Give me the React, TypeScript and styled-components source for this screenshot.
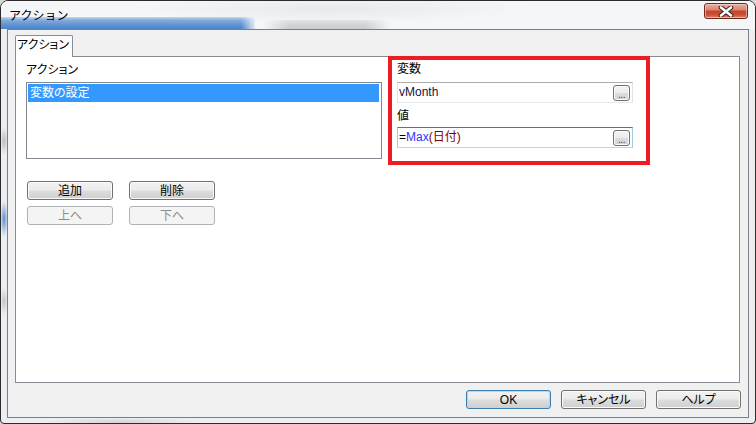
import styled, { createGlobalStyle } from "styled-components";

const GlobalStyle = createGlobalStyle`
  html, body {
    margin: 0;
    padding: 0;
    background: #d9dadc;
  }
  body {
    font-family: "Liberation Sans", "Noto Sans CJK JP", sans-serif;
    font-size: 12px;
    font-feature-settings: "palt";
    color: #000;
  }
  * { box-sizing: border-box; }
`;

const Window = styled.div`
  width: 756px;
  height: 424px;
  border: 1px solid #2b2b2b;
  border-radius: 8px 8px 4px 4px;
  background-color: #eceef1;
  background-image:
    radial-gradient(ellipse 4px 18px at 3px 218px, #5d8fd0, rgba(93, 143, 208, 0)),
    radial-gradient(ellipse 4px 14px at 3px 140px, #b9bcc0, rgba(185, 188, 192, 0)),
    radial-gradient(ellipse 4px 14px at 3px 300px, #c3c5c8, rgba(195, 197, 200, 0)),
    radial-gradient(ellipse 80px 4px at 120px 421px, #d2d4d6, rgba(210, 212, 214, 0));
  background-repeat: no-repeat;
  display: flex;
  flex-direction: column;
  padding: 0 6px 5px 6px;
  overflow: hidden;
`;

const TitleBar = styled.div`
  height: 28px;
  margin: 0 -6px;
  padding: 0 7px 0 7px;
  display: flex;
  justify-content: space-between;
  align-items: flex-start;
  background-color: #f5f6f8;
  background-image:
    linear-gradient(to right, rgba(245, 246, 248, 0), #f5f6f8),
    linear-gradient(to bottom, #c4d7ef, #86acdd 25%, #6596d2 60%, #4a84c8),
    linear-gradient(to right, rgba(245, 246, 248, 1), rgba(245, 246, 248, 0) 20%, rgba(245, 246, 248, 0) 80%, rgba(245, 246, 248, 1)),
    linear-gradient(to bottom, #e2e3e5, #d3d4d6 50%, #cbcccd),
    radial-gradient(ellipse 200px 14px at 330px 8px, #e8e9eb, rgba(245, 246, 248, 0));
  background-position: 240px 16px, 0 16px, 262px 19px, 262px 19px, 0 0;
  background-size: 16px 12px, 254px 12px, 128px 9px, 128px 9px, 100% 100%;
  background-repeat: no-repeat;
`;

const Title = styled.div`
  font-family: "Noto Sans CJK JP", sans-serif;
  font-feature-settings: normal;
  font-size: 12px;
  line-height: 27px;
  padding-left: 1px;
`;

const CloseButton = styled.div`
  width: 44px;
  height: 16px;
  margin-top: 2px;
  border: 1px solid #6b2a1d;
  border-radius: 3px;
  background: linear-gradient(to bottom, #eab2a5 0%, #dc8470 42%, #c6432a 52%, #cd5038 78%, #e0876a 100%);
  box-shadow: inset 0 0 0 1px rgba(255, 220, 210, 0.55);
  display: flex;
  align-items: center;
  justify-content: center;
`;

const Client = styled.div`
  flex: 1;
  border: 1px solid #7b7e83;
  background: #f0f0f0;
  display: flex;
  flex-direction: column;
`;

const TabStrip = styled.div`
  display: flex;
  padding: 5px 0 0 7px;
`;

const Tab = styled.div`
  position: relative;
  z-index: 1;
  width: 58px;
  height: 22px;
  margin-bottom: -1px;
  border: 1px solid #898c95;
  border-bottom: none;
  border-radius: 2px 2px 0 0;
  background: linear-gradient(to bottom, #fcfcfc, #ffffff);
  text-align: center;
  line-height: 19px;
  padding-right: 2px;
`;

const TabPanel = styled.div`
  height: 327px;
  margin: 0 8px 0 7px;
  border: 1px solid #898c95;
  background: #fff;
  display: flex;
  align-items: flex-start;
`;

const LeftColumn = styled.div`
  width: 356px;
  margin-left: 10px;
  padding-top: 6px;
`;

const Label = styled.div<{ $mt?: number; $mb?: number }>`
  height: 14px;
  line-height: 14px;
  margin-top: ${(p) => p.$mt ?? 0}px;
  margin-bottom: ${(p) => p.$mb ?? 0}px;
  white-space: nowrap;
`;

const ListBox = styled.div`
  height: 77px;
  border: 1px solid #828790;
  background: #fff;
  padding: 1px 2px 1px 1px;
`;

const ListItem = styled.div<{ $selected?: boolean }>`
  height: 18px;
  line-height: 18px;
  padding-left: 2px;
  background: ${(p) => (p.$selected ? "#3399ff" : "transparent")};
  color: ${(p) => (p.$selected ? "#fff" : "#000")};
`;

const ButtonGrid = styled.div`
  display: grid;
  grid-template-columns: 86px 86px;
  column-gap: 16px;
  row-gap: 6px;
  margin: 22px 0 0 1px;
`;

const Button = styled.div<{ $disabled?: boolean; $default?: boolean; $w?: number }>`
  width: ${(p) => p.$w ?? 86}px;
  height: 19px;
  border-radius: 3px;
  display: flex;
  align-items: center;
  justify-content: center;
  line-height: 1;
  border: 1px solid ${(p) => (p.$disabled ? "#adb2b5" : p.$default ? "#3c7fb1" : "#707070")};
  color: ${(p) => (p.$disabled ? "#8d8d8d" : "#000")};
  background: ${(p) =>
    p.$disabled
      ? "#f4f4f4"
      : "linear-gradient(to bottom, #f2f2f2 0%, #ebebeb 48%, #dddddd 52%, #cfcfcf 100%)"};
  box-shadow: ${(p) =>
    p.$disabled ? "none" : p.$default ? "inset 0 0 0 1px #9de0fb" : "inset 0 0 0 1px #fbfbfb"};
`;

const Highlight = styled.div`
  width: 262px;
  height: 109px;
  margin: -1px 0 0 6px;
  border: 4px solid #ed1c24;
  padding: 0 0 0 5px;
  background: #fff;
`;

const Field = styled.div<{ $focused?: boolean }>`
  width: 236px;
  height: 21px;
  display: flex;
  align-items: center;
  justify-content: space-between;
  padding: 0 2px 0 1px;
  background: #fff;
  border: 1px solid;
  border-color: ${(p) =>
    p.$focused ? "#3d7bad #a4c9e3 #b7d9ed #a4c9e3" : "#abadb3 #e2e3ea #e3e9ef #e2e3ea"};
`;

const FieldText = styled.div`
  line-height: 19px;
  white-space: nowrap;
  color: #15153a;
`;

const Token = styled.span<{ $color: string }>`
  color: ${(p) => p.$color};
`;

const EllipsisButton = styled.div`
  width: 17px;
  height: 16px;
  border: 1px solid #707070;
  border-radius: 3px;
  background: linear-gradient(to bottom, #f4f4f4 0%, #ececec 48%, #dcdcdc 52%, #d2d2d2 100%);
  box-shadow: inset 0 0 0 1px #fbfbfb;
  font-size: 10px;
  line-height: 18px;
  text-align: center;
  color: #40406a;
  letter-spacing: -0.5px;
  overflow: hidden;
`;

const Footer = styled.div`
  display: flex;
  justify-content: flex-end;
  gap: 10px;
  padding: 7px 7px 8px 0;
`;

const CloseIcon = () => (
  <svg width="16" height="11" viewBox="0 0 16 11">
    <path d="M3 1.5 L13 9.5 M13 1.5 L3 9.5" stroke="#3a2420" strokeWidth="4.6" strokeLinecap="round" />
    <path d="M3 1.5 L13 9.5 M13 1.5 L3 9.5" stroke="#ffffff" strokeWidth="2.6" strokeLinecap="round" />
  </svg>
);

const App = () => {
  return (
    <>
      <GlobalStyle />
      <Window>
        <TitleBar>
          <Title>アクション</Title>
          <CloseButton>
            <CloseIcon />
          </CloseButton>
        </TitleBar>
        <Client>
          <TabStrip>
            <Tab>アクション</Tab>
          </TabStrip>
          <TabPanel>
            <LeftColumn>
              <Label $mb={5}>アクション</Label>
              <ListBox>
                <ListItem $selected>変数の設定</ListItem>
              </ListBox>
              <ButtonGrid>
                <Button>追加</Button>
                <Button>削除</Button>
                <Button $disabled>上へ</Button>
                <Button $disabled>下へ</Button>
              </ButtonGrid>
            </LeftColumn>
            <Highlight>
              <Label $mt={2} $mb={6}>変数</Label>
              <Field>
                <FieldText>vMonth</FieldText>
                <EllipsisButton>...</EllipsisButton>
              </Field>
              <Label $mt={6} $mb={4}>値</Label>
              <Field $focused>
                <FieldText>
                  <Token $color="#000">=</Token>
                  <Token $color="#3333ff">Max</Token>
                  <Token $color="#800000">(日付)</Token>
                </FieldText>
                <EllipsisButton>...</EllipsisButton>
              </Field>
            </Highlight>
          </TabPanel>
          <Footer>
            <Button $default $w={85}>OK</Button>
            <Button $w={85}>キャンセル</Button>
            <Button $w={85}>ヘルプ</Button>
          </Footer>
        </Client>
      </Window>
    </>
  );
};

export default App;
